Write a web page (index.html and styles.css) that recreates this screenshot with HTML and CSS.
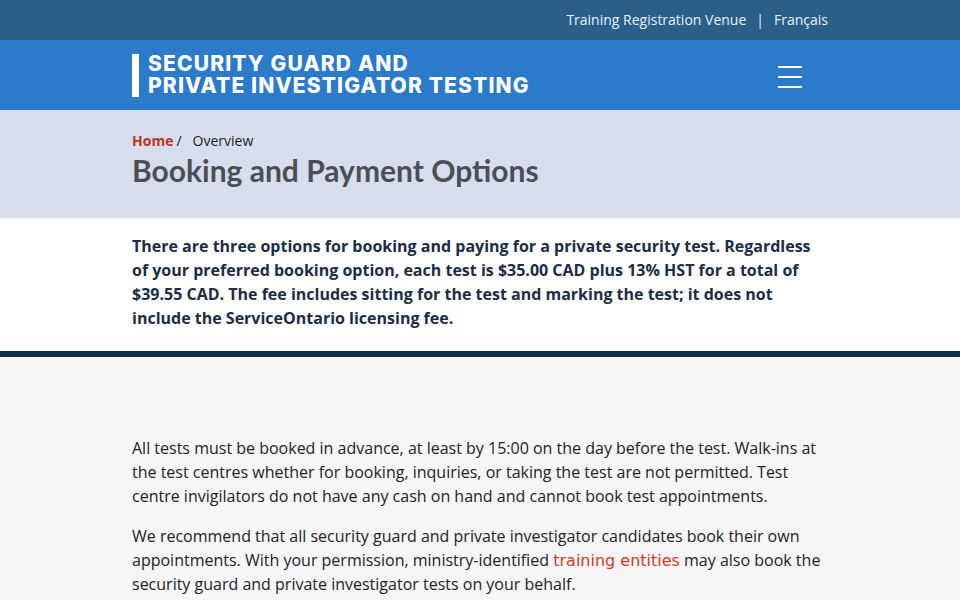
FILE: index.html
```html
<!DOCTYPE html>
<html lang="en">
<head>
    <meta charset="UTF-8">
    <meta name="viewport" content="width=device-width, initial-scale=1.0">
    <title>Booking and Payment Options</title>
    <link rel="stylesheet" href="styles.css">
</head>
<body>
    <div class="topbar">
        <div class="container topbar-inner">
            <a href="#">Training Registration Venue</a>
            <span class="sep">|</span>
            <a href="#">Français</a>
        </div>
    </div>

    <header class="header">
        <div class="container header-inner">
            <a class="brand" href="#">
                <span class="brand-bar"></span>
                <span class="brand-text">SECURITY GUARD AND<br>PRIVATE INVESTIGATOR TESTING</span>
            </a>
            <button class="menu" aria-label="Menu">
                <svg width="24" height="22" viewBox="0 0 24 22">
                    <path d="M0 1h24M0 11h24M0 21h24" stroke="#ffffff" stroke-width="2"/>
                </svg>
            </button>
        </div>
    </header>

    <section class="page-title">
        <div class="container">
            <nav class="breadcrumb">
                <a href="#">Home</a><span class="slash">/</span><span>Overview</span>
            </nav>
            <h1>Booking and Payment Options</h1>
        </div>
    </section>

    <section class="intro">
        <div class="container">
            <p>There are three options for booking and paying for a private security test. Regardless of your preferred booking option, each test is $35.00 CAD plus 13% HST for a total of $39.55 CAD. The fee includes sitting for the test and marking the test; it does not include the ServiceOntario licensing fee.</p>
        </div>
    </section>

    <main class="content">
        <div class="container">
            <p>All tests must be booked in advance, at least by 15:00 on the day before the test. Walk-ins at the test centres whether for booking, inquiries, or taking the test are not permitted. Test centre invigilators do not have any cash on hand and cannot book test appointments.</p>
            <p>We recommend that all security guard and private investigator candidates book their own appointments. With your permission, ministry-identified <a href="#">training entities</a> may also book the security guard and private investigator tests on your behalf.</p>
        </div>
    </main>
</body>
</html>
```

FILE: styles.css
```css
* {
    margin: 0;
    padding: 0;
    box-sizing: border-box;
}

body {
    font-family: 'Open Sans', 'Noto Sans', sans-serif;
    font-size: 16px;
    line-height: 24px;
    color: #222222;
    background: #f6f6f8;
}

a {
    text-decoration: none;
}

.container {
    width: 696px;
    margin: 0 auto;
}

.topbar {
    height: 40px;
    background: #2a5f8a;
    font-size: 14px;
}

.topbar-inner {
    display: flex;
    justify-content: flex-end;
    align-items: center;
    height: 40px;
}

.topbar a {
    color: #e6f0fa;
}

.topbar .sep {
    color: #e6f0fa;
    margin: 0 10px;
}

.header {
    height: 70px;
    background: #2b7bca;
}

.header-inner {
    display: flex;
    justify-content: space-between;
    align-items: center;
    height: 70px;
}

.brand {
    display: flex;
    align-items: center;
    gap: 9px;
}

.brand-bar {
    width: 7px;
    height: 43px;
    background: #ffffff;
}

.brand-text {
    font-family: 'Inter', 'DejaVu Sans', sans-serif;
    font-weight: 800;
    font-size: 21px;
    line-height: 22px;
    letter-spacing: 1.15px;
    color: #ffffff;
}

.menu {
    display: flex;
    align-items: center;
    justify-content: center;
    width: 40px;
    height: 40px;
    margin: 4px 18px 0 0;
    border: none;
    background: transparent;
    cursor: pointer;
}

.page-title {
    height: 108px;
    background: #d6deee;
    padding-top: 21px;
}

.breadcrumb {
    font-size: 14px;
    line-height: 20px;
    color: #222222;
}

.breadcrumb a {
    color: #c0321f;
    font-weight: 700;
}

.breadcrumb .slash {
    margin: 0 11px 0 3px;
}

.page-title h1 {
    font-family: 'Lato', 'Open Sans', sans-serif;
    font-weight: 700;
    font-size: 30px;
    line-height: 36px;
    margin-top: 1px;
    color: #4a4e55;
}

.intro {
    background: #ffffff;
    padding: 16px 0 21px;
    border-bottom: 6px solid #10304a;
}

.intro p {
    font-weight: 700;
    color: #1a2d45;
}

.content {
    padding-top: 79px;
}

.content p {
    margin-bottom: 16px;
}

.content a {
    font-family: 'DejaVu Sans', sans-serif;
    font-size: 16px;
    line-height: 1;
    color: #d23a24;
}
```
